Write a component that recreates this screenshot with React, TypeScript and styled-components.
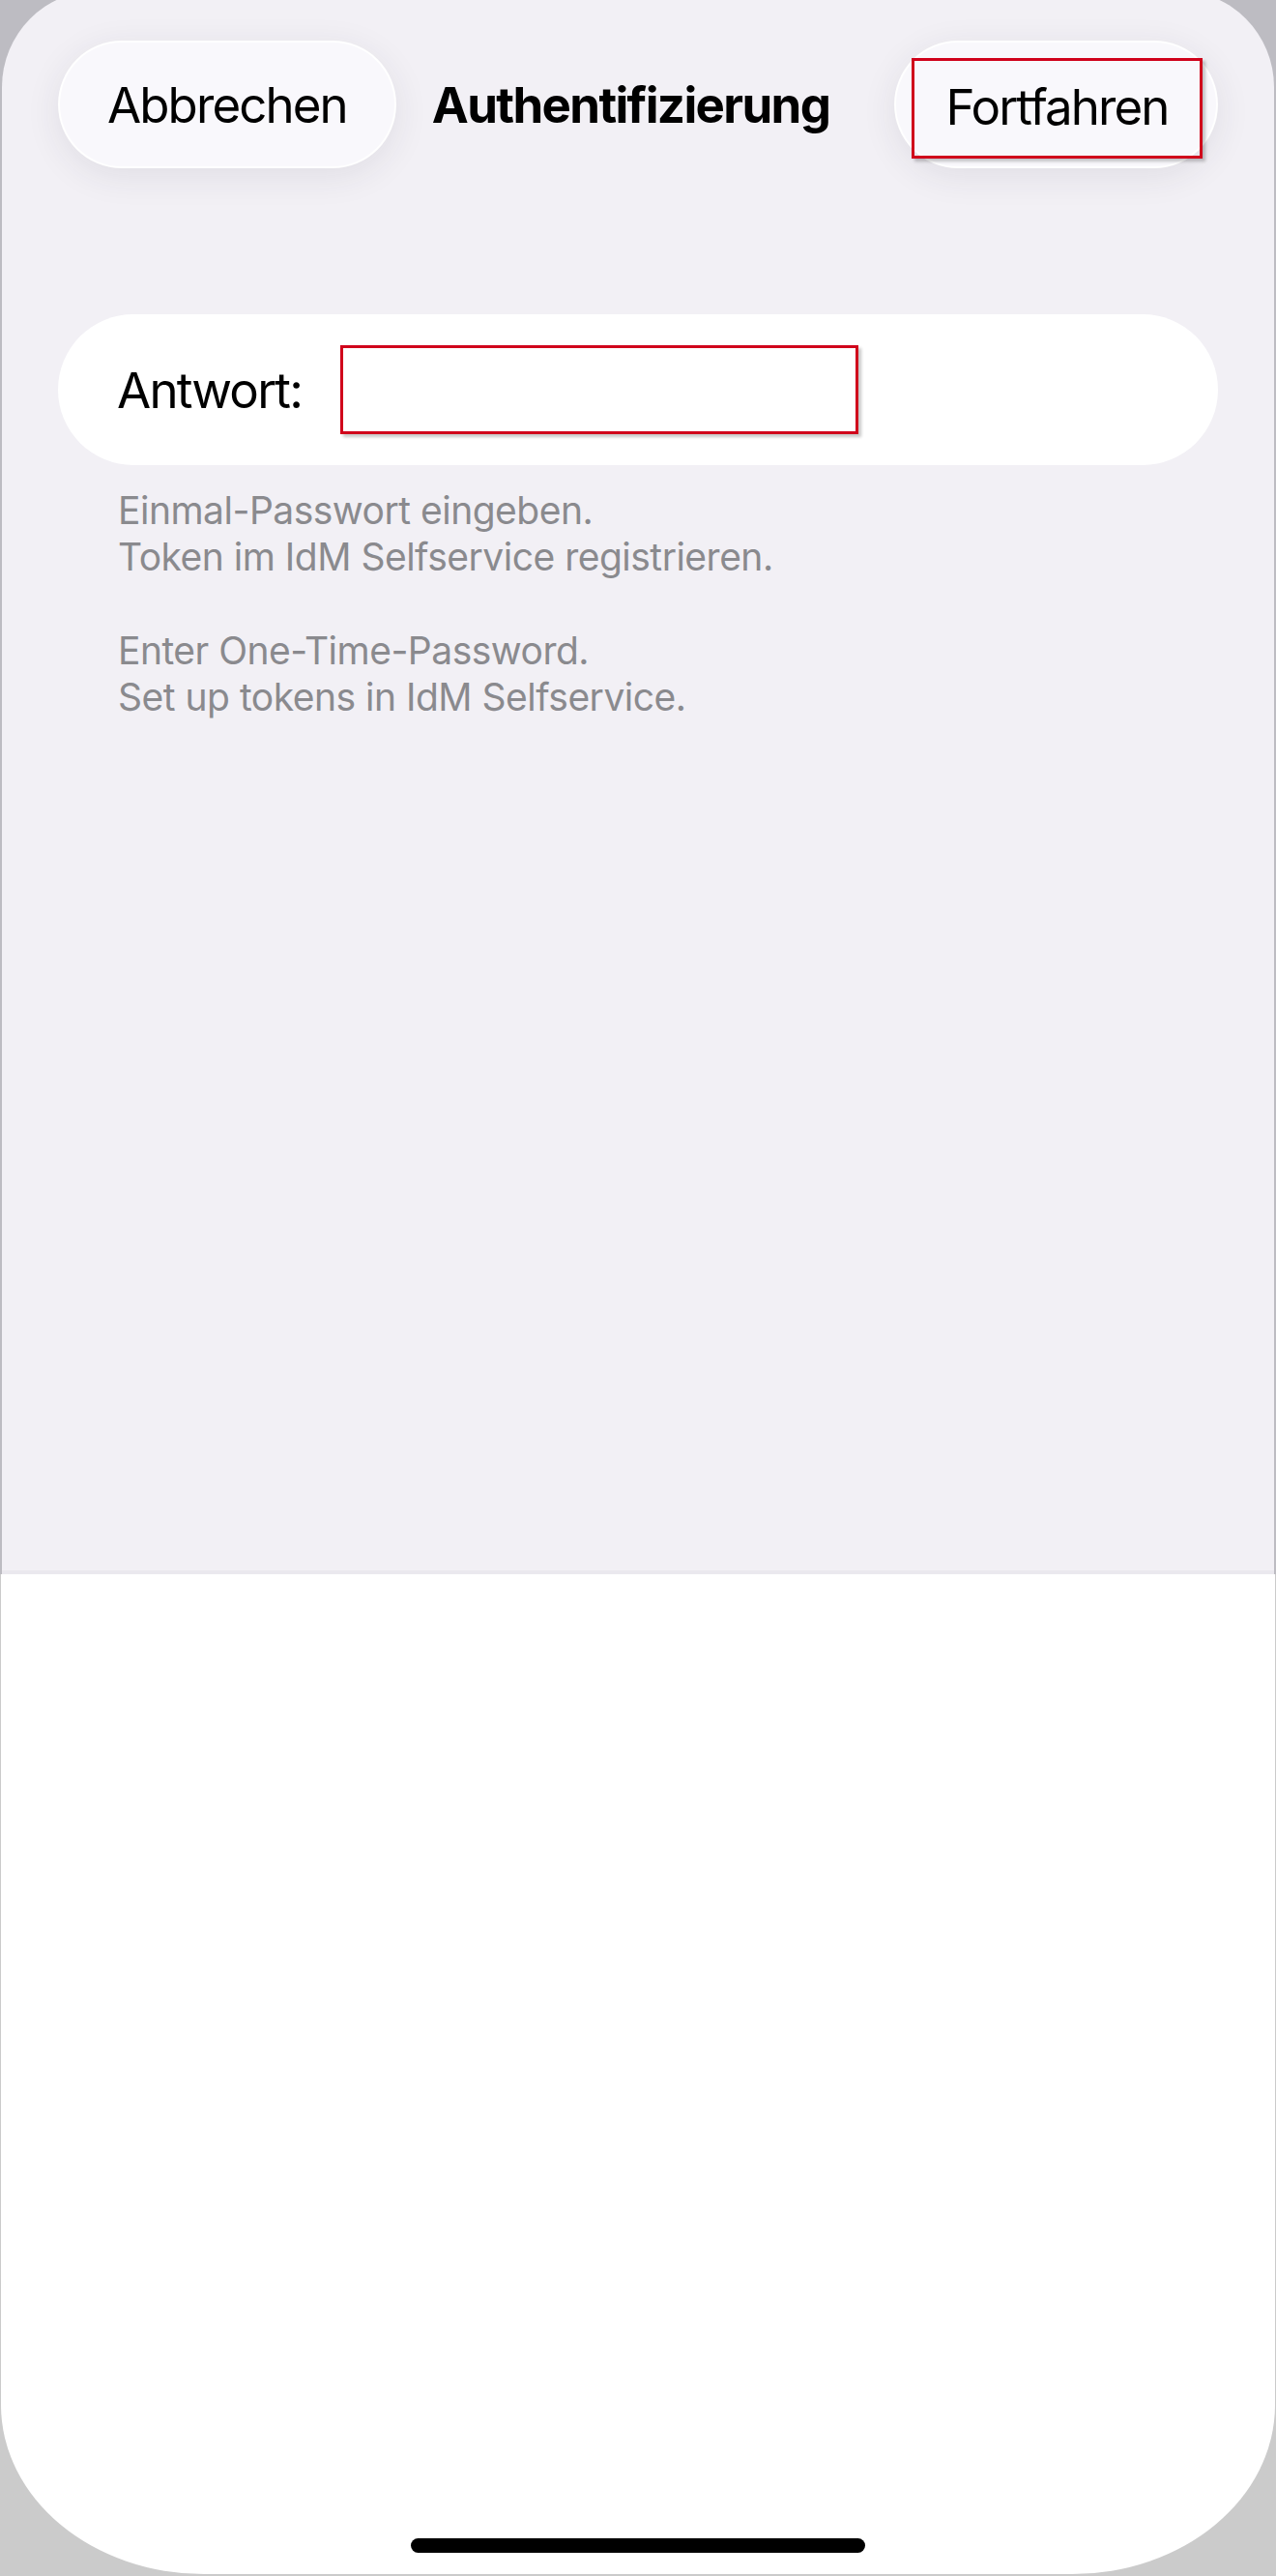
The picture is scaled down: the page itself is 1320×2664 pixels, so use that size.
import React from 'react'
import styled, { createGlobalStyle } from 'styled-components'

const GlobalStyle = createGlobalStyle`
body {
    margin: 0;
    background-color: #cbcbcb;
    font-family: Inter, "Liberation Sans", sans-serif;
    -webkit-font-smoothing: antialiased;
}
`

const Screen = styled.div`
width: 1320px;
height: 2664px;
display: flex;
flex-direction: column;
overflow: hidden;
`

const TopZone = styled.div`
background-color: #bdbcc2;
padding: 0 2px;
`

const Sheet = styled.div`
box-sizing: border-box;
margin-top: -10px;
height: 1638px;
padding: 52px 58px 0;
background-color: #f2f0f5;
border-radius: 100px 100px 0 0;
border-bottom: 4px solid #eae8ee;
display: flex;
flex-direction: column;
`

const TopBar = styled.div`
display: flex;
align-items: center;
height: 132px;
`

const PillButton = styled.button<{ $right?: boolean }>`
box-sizing: border-box;
height: 132px;
border-radius: 66px;
border: 2px solid rgba(255, 255, 255, 0.95);
background-color: #f9f8fc;
box-shadow: 0 8px 36px rgba(40, 40, 70, 0.09);
color: #000;
font-family: inherit;
font-size: 51px;
letter-spacing: -1.9px;
display: flex;
align-items: center;
justify-content: center;
cursor: pointer;
padding: ${p => (p.$right ? '16px 14px 8px 16px' : '0 49px')};
margin-left: ${p => (p.$right ? 'auto' : '0')};
`

const FocusBox = styled.span`
box-sizing: border-box;
width: 301px;
height: 104px;
border: 3px solid #d0021b;
box-shadow: 3px 3px 3px rgba(0, 0, 0, 0.22);
display: flex;
align-items: center;
justify-content: center;
padding-bottom: 4px;
`

const Title = styled.h1`
margin: 0 0 0 37px;
font-size: 51px;
font-weight: 700;
letter-spacing: -1.65px;
color: #000;
`

const Card = styled.div`
box-sizing: border-box;
margin-top: 151px;
height: 156px;
border-radius: 78px;
background-color: #fff;
display: flex;
align-items: center;
padding-left: 61px;
`

const Label = styled.label`
font-size: 51px;
letter-spacing: -1.8px;
color: #000;
`

const AnswerInput = styled.input`
box-sizing: border-box;
margin-left: 40px;
width: 536px;
height: 92px;
border: 3px solid #d0021b;
background-color: #fff;
box-shadow: 3px 3px 3px rgba(0, 0, 0, 0.22);
outline: none;
font-family: inherit;
font-size: 51px;
`

const Help = styled.div`
margin-top: 23px;
padding-left: 62px;
color: #8a8a8e;
font-size: 39px;
line-height: 48px;
letter-spacing: -0.5px;
`

const HelpPara = styled.p`
margin: 0 0 49px;
`

const BottomZone = styled.div`
flex: 1;
display: flex;
background-color: #cbcbcb;
padding: 0 1px 2px;
`

const Panel = styled.div`
flex: 1;
background-color: #fff;
border-radius: 0 0 210px 210px / 0 0 175px 175px;
display: flex;
flex-direction: column;
justify-content: flex-end;
align-items: center;
padding-bottom: 22px;
`

const HomeBar = styled.div`
width: 470px;
height: 15px;
border-radius: 8px;
background-color: #000;
`

const App: React.FC = () => {
    return (
        <Screen>
            <GlobalStyle />
            <TopZone>
                <Sheet>
                    <TopBar>
                        <PillButton>Abbrechen</PillButton>
                        <Title>Authentifizierung</Title>
                        <PillButton $right>
                            <FocusBox>Fortfahren</FocusBox>
                        </PillButton>
                    </TopBar>
                    <Card>
                        <Label htmlFor="answer">Antwort:</Label>
                        <AnswerInput id="answer" type="password" />
                    </Card>
                    <Help>
                        <HelpPara>
                            Einmal-Passwort eingeben.<br />
                            Token im IdM Selfservice registrieren.
                        </HelpPara>
                        <HelpPara>
                            Enter One-Time-Password.<br />
                            Set up tokens in IdM Selfservice.
                        </HelpPara>
                    </Help>
                </Sheet>
            </TopZone>
            <BottomZone>
                <Panel>
                    <HomeBar />
                </Panel>
            </BottomZone>
        </Screen>
    )
}

export default App
